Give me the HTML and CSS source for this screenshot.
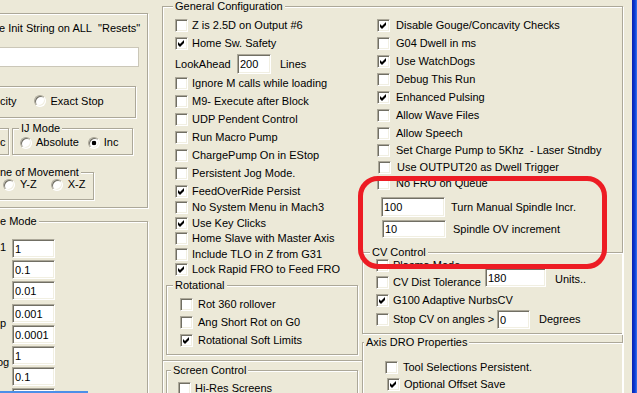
FILE: index.html
```html
<!DOCTYPE html>
<html lang="en">
<head>
    <meta charset="UTF-8">
    <title>General Configuration</title>
    <link rel="stylesheet" href="styles.css">
</head>
<body>
<div class="screen">
    <!-- left column, cut off by the window edge -->
    <div class="col-left">
        <div class="grp grp-init">
            <div class="init-text">e Init String on ALL&nbsp; "Resets"</div>
            <input class="edit edit-flat" type="text">
            <div class="grp grp-motion">
                <span>city</span>
                <span class="rb stop-rb"></span>
                <span class="rb-label">Exact Stop</span>
            </div>
            <div class="mode-row">
                <div class="grp grp-dist"><span>c</span></div>
                <div class="grp grp-ij">
                    <div class="grp-title">IJ Mode</div>
                    <div class="radio-row ij-row">
                        <span class="rb"></span><span class="rb-label">Absolute</span>
                        <span class="rb on ij-inc"></span><span class="rb-label">Inc</span>
                    </div>
                </div>
            </div>
            <div class="grp grp-plane">
                <div class="grp-title">ne of Movement</div>
                <div class="radio-row plane-row">
                    <span class="rb"></span><span class="rb-label">Y-Z</span>
                    <span class="rb plane-xz"></span><span class="rb-label">X-Z</span>
                </div>
            </div>
        </div>

        <div class="grp grp-jog">
            <div class="grp-title">e Mode</div>
            <div class="jog-body">
                <div class="jog-labels">
                    <span class="jog-l1">1</span>
                    <span class="jog-l2">p</span>
                    <span class="jog-l3">og</span>
                </div>
                <div class="jog-inputs">
                    <input class="edit edit-jog" type="text" value="1">
                    <input class="edit edit-jog" type="text" value="0.1">
                    <input class="edit edit-jog" type="text" value="0.01">
                    <input class="edit edit-jog step" type="text" value="0.001">
                    <input class="edit edit-jog" type="text" value="0.0001">
                    <input class="edit edit-jog" type="text" value="1">
                    <input class="edit edit-jog" type="text" value="0.1">
                    <input class="edit edit-jog" type="text" value="0.01">
                </div>
            </div>
        </div>
    </div>

    <!-- General Configuration -->
    <div class="grp grp-gen">
        <div class="grp-title">General Configuration</div>
        <div class="gen-body">
            <div class="col-mid">
                <div class="mid-top">
                    <div class="chk first"><span class="cb"></span><span>Z is 2.5D on Output #6</span></div>
                    <div class="chk"><span class="cb"><svg width="11" height="11" viewBox="0 0 11 11"><path d="M2 4l2 2 4-4v3l-4 4-2-2z"/></svg></span><span>Home Sw. Safety</span></div>
                    <div class="look-row">
                        <span class="look-label">LookAhead</span>
                        <input class="edit edit-look" type="text" value="200">
                        <span class="look-unit">Lines</span>
                    </div>
                    <div class="chk"><span class="cb"></span><span>Ignore M calls while loading</span></div>
                    <div class="chk"><span class="cb"></span><span>M9- Execute after Block</span></div>
                    <div class="chk"><span class="cb"></span><span>UDP Pendent Control</span></div>
                    <div class="chk"><span class="cb"></span><span>Run Macro Pump</span></div>
                    <div class="chk"><span class="cb"></span><span>ChargePump On in EStop</span></div>
                    <div class="chk"><span class="cb"></span><span>Persistent Jog Mode.</span></div>
                    <div class="chk"><span class="cb"><svg width="11" height="11" viewBox="0 0 11 11"><path d="M2 4l2 2 4-4v3l-4 4-2-2z"/></svg></span><span>FeedOverRide Persist</span></div>
                    <div class="chk tight"><span class="cb"></span><span>No System Menu in Mach3</span></div>
                    <div class="chk tight"><span class="cb"><svg width="11" height="11" viewBox="0 0 11 11"><path d="M2 4l2 2 4-4v3l-4 4-2-2z"/></svg></span><span>Use Key Clicks</span></div>
                    <div class="chk tight"><span class="cb"></span><span>Home Slave with Master Axis</span></div>
                    <div class="chk tight"><span class="cb"></span><span>Include TLO in Z from G31</span></div>
                    <div class="chk tight"><span class="cb"><svg width="11" height="11" viewBox="0 0 11 11"><path d="M2 4l2 2 4-4v3l-4 4-2-2z"/></svg></span><span>Lock Rapid FRO to Feed FRO</span></div>

                    <div class="grp grp-rot">
                        <div class="grp-title">Rotational</div>
                        <div class="chk first"><span class="cb"></span><span>Rot 360 rollover</span></div>
                        <div class="chk"><span class="cb"></span><span>Ang Short Rot on G0</span></div>
                        <div class="chk"><span class="cb"><svg width="11" height="11" viewBox="0 0 11 11"><path d="M2 4l2 2 4-4v3l-4 4-2-2z"/></svg></span><span>Rotational Soft Limits</span></div>
                    </div>
                </div>

                <div class="grp grp-screen">
                    <div class="grp-title">Screen Control</div>
                    <div class="chk"><span class="cb"></span><span>Hi-Res Screens</span></div>
                </div>
            </div>

            <div class="col-right">
                <div class="chk first"><span class="cb"><svg width="11" height="11" viewBox="0 0 11 11"><path d="M2 4l2 2 4-4v3l-4 4-2-2z"/></svg></span><span>Disable Gouge/Concavity Checks</span></div>
                <div class="chk"><span class="cb"></span><span>G04 Dwell in ms</span></div>
                <div class="chk"><span class="cb"><svg width="11" height="11" viewBox="0 0 11 11"><path d="M2 4l2 2 4-4v3l-4 4-2-2z"/></svg></span><span>Use WatchDogs</span></div>
                <div class="chk"><span class="cb"></span><span>Debug This Run</span></div>
                <div class="chk"><span class="cb"><svg width="11" height="11" viewBox="0 0 11 11"><path d="M2 4l2 2 4-4v3l-4 4-2-2z"/></svg></span><span>Enhanced Pulsing</span></div>
                <div class="chk"><span class="cb"></span><span>Allow Wave Files</span></div>
                <div class="chk"><span class="cb"></span><span>Allow Speech</span></div>
                <div class="chk h17"><span class="cb"></span><span>Set Charge Pump to 5Khz&nbsp; - Laser Stndby</span></div>
                <div class="chk h16 nudge"><span class="cb"></span><span>Use OUTPUT20 as Dwell Trigger</span></div>
                <div class="chk h16"><span class="cb"></span><span>No FRO on Queue</span></div>

                <div class="spin-row spin-turn">
                    <input class="edit edit-spin" type="text" value="100">
                    <span>Turn Manual Spindle Incr.</span>
                </div>
                <div class="spin-row spin-ov">
                    <input class="edit edit-spin" type="text" value="10">
                    <span>Spindle OV increment</span>
                </div>

                <div class="grp grp-cv">
                    <div class="grp-title">CV Control</div>
                    <div class="chk h16 plasma"><span class="cb"></span><span>Plasma Mode</span></div>
                    <div class="chk cv-dist">
                        <span class="cb"></span><span class="cv-text">CV Dist Tolerance</span>
                        <input class="edit edit-dist" type="text" value="180">
                        <span class="cv-unit">Units..</span>
                    </div>
                    <div class="chk h19"><span class="cb"><svg width="11" height="11" viewBox="0 0 11 11"><path d="M2 4l2 2 4-4v3l-4 4-2-2z"/></svg></span><span>G100 Adaptive NurbsCV</span></div>
                    <div class="chk h19">
                        <span class="cb"></span><span class="cv-angle">Stop CV on angles &gt;</span>
                        <input class="edit edit-angle" type="text" value="0">
                        <span class="cv-deg">Degrees</span>
                    </div>
                </div>

                <div class="grp grp-dro">
                    <div class="grp-title">Axis DRO Properties</div>
                    <div class="chk first dro-tool"><span class="cb"></span><span>Tool Selections Persistent.</span></div>
                    <div class="chk h17 dro-save"><span class="cb"><svg width="11" height="11" viewBox="0 0 11 11"><path d="M2 4l2 2 4-4v3l-4 4-2-2z"/></svg></span><span>Optional Offset Save</span></div>
                </div>
            </div>
        </div>
    </div>

    <div class="frame-edge"></div>

    <!-- hand-drawn highlight and taskbar sliver on top -->
    <div class="mark"></div>
    <div class="task-strip"></div>
</div>
</body>
</html>
```

FILE: styles.css
```css
body {
    margin: 0;
    background-color: #ece9d8;
    font-family: 'Liberation Sans', Arial, sans-serif;
    font-size: 11px;
    line-height: 13px;
    color: #000;
    overflow: hidden;
}

.screen {
    position: relative;
    display: flex;
    align-items: flex-start;
    width: 637px;
    height: 393px;
    overflow: hidden;
    white-space: nowrap;
}

/* etched group box */
.grp {
    box-sizing: border-box;
    flex: none;
    border: 1px solid #aca899;
    box-shadow: inset 1px 1px #fff, 1px 1px #fff;
}

.grp-title {
    display: table;
    margin: -7px 0 0 6px;
    padding: 0 2px;
    background-color: #ece9d8;
}

/* sunken edit box */
.edit {
    box-sizing: border-box;
    display: block;
    flex: none;
    margin: 0;
    padding: 0 2px;
    border: 1px solid;
    border-color: #aca899 #fff #fff #aca899;
    box-shadow: inset 1px 1px #716f64, inset -1px -1px #f1efe2;
    background-color: #fff;
    font: inherit;
    color: #000;
    outline: none;
}

/* checkbox */
.cb {
    box-sizing: border-box;
    display: flex;
    flex: none;
    width: 13px;
    height: 13px;
    margin-right: 4px;
    border: 1px solid;
    border-color: #aca899 #fff #fff #aca899;
    box-shadow: inset 1px 1px #716f64, inset -1px -1px #f1efe2;
    background-color: #fff;
}

.cb svg {
    display: block;
    fill: #000;
}

/* radio button */
.rb {
    box-sizing: border-box;
    flex: none;
    width: 12px;
    height: 12px;
    border-radius: 50%;
    border: 1px solid;
    border-color: #aca899 #fff #fff #aca899;
    box-shadow: inset 1px 1px #716f64, inset -1px -1px #f1efe2;
    background-color: #fff;
}

.rb.on {
    background: radial-gradient(circle, #000 0 2px, #fff 2.6px);
}

.rb-label {
    margin-left: 4px;
}

.chk {
    display: flex;
    align-items: center;
    height: 18px;
}

.chk.first {
    margin-top: 3px;
}

.chk.tight {
    height: 15.5px;
}

.h16 { height: 16px; }
.h17 { height: 17px; }
.h19 { height: 19px; }

/* ---------- left column ---------- */
.col-left {
    flex: none;
    width: 148px;
}

.grp-init {
    width: 178px;
    height: 195px;
    margin: 13px 0 0 -30px;
    padding-left: 29px;
}

.init-text {
    margin: 8px 0 0 -1px;
}

.edit-flat {
    width: 149px;
    height: 20px;
    margin: 12px 0 0 -10px;
    border-color: #cbc7b8;
    box-shadow: none;
}

.grp-motion {
    display: flex;
    align-items: center;
    width: 156px;
    height: 32px;
    margin: 19px 0 0 -20px;
    padding: 0 0 2px 19px;
}

.stop-rb {
    margin-left: 17px;
}

.grp-motion .rb-label {
    margin-left: 5px;
}

.mode-row {
    display: flex;
    margin-top: 10px;
}

.grp-dist {
    display: flex;
    align-items: center;
    width: 29px;
    height: 27px;
    margin-left: -20px;
    padding: 2px 0 0 19px;
}

.grp-ij {
    width: 121px;
    height: 27px;
    margin-left: 3px;
}

.radio-row {
    display: flex;
    align-items: center;
    height: 13px;
}

.ij-row {
    margin-top: 1px;
    padding-left: 7px;
}

.ij-inc {
    margin-left: 9px;
}

.grp-plane {
    width: 124px;
    height: 28px;
    margin: 17px 0 0 -30px;
}

.grp-plane .grp-title {
    margin-left: 27px;
}

.plane-row {
    margin-top: -1px;
    padding-left: 32px;
}

.plane-row .rb-label {
    margin-left: 5px;
}

.plane-xz {
    margin-left: 14px;
}

.grp-jog {
    width: 178px;
    height: 200px;
    margin: 13px 0 0 -30px;
}

.grp-jog .grp-title {
    margin-left: 27px;
}

.jog-body {
    display: flex;
    padding-left: 29px;
}

.jog-labels {
    display: flex;
    flex-direction: column;
    align-items: flex-start;
    width: 12px;
}

.jog-l1 { margin-top: 13px; }
.jog-l2 { margin-top: 63px; }
.jog-l3 { margin: 26px 0 0 -3px; }

.jog-inputs {
    display: flex;
    flex-direction: column;
    gap: 2px;
    margin-top: 11px;
}

.edit-jog {
    width: 43px;
    height: 19px;
}

.edit-jog.step {
    margin-top: 2px;
}

/* ---------- general configuration ---------- */
.grp-gen {
    width: 461px;
    height: 400px;
    margin: 6px 0 0 14px;
    border-bottom: none;
}

.grp-gen > .grp-title {
    margin-left: 10px;
}

.gen-body {
    display: flex;
}

.col-mid {
    flex: none;
    width: 199px;
}

.mid-top {
    height: 344px;
    border-bottom: 1px solid #aca899;
    box-shadow: 0 1px #fff;
}

.mid-top > .chk {
    padding-left: 12px;
}

.look-row {
    display: flex;
    align-items: center;
    height: 20px;
    margin-top: 2px;
    padding-left: 12px;
}

.look-label {
    width: 62px;
}

.edit-look {
    width: 34px;
    height: 20px;
}

.look-unit {
    margin-left: 9px;
}

.grp-rot {
    width: 192px;
    height: 70px;
    margin: 7.5px 0 0 3px;
}

.grp-rot .chk {
    padding-left: 13px;
}

.grp-rot .cb {
    margin-right: 5px;
}

.grp-screen {
    width: 192px;
    height: 40px;
    margin: 9px 0 0 3px;
}

.grp-screen .grp-title {
    margin-left: 4px;
}

.grp-screen .chk {
    margin-top: 2px;
    padding-left: 11px;
}

.col-right {
    flex: none;
    width: 260px;
}

.col-right > .chk {
    padding-left: 15px;
}

.col-right .cb {
    margin-right: 6px;
}

.col-right > .chk.nudge {
    padding-left: 16px;
}

.spin-row {
    display: flex;
    align-items: center;
}

.edit-spin {
    width: 64px;
}

.spin-turn {
    margin-top: 6px;
    padding-left: 19px;
}

.spin-turn .edit-spin {
    height: 20px;
    margin-right: 6px;
}

.spin-ov {
    margin-top: 3px;
    padding-left: 20px;
}

.spin-ov .edit-spin {
    height: 18px;
    margin-right: 7px;
}

.grp-cv {
    width: 260px;
    height: 82px;
    margin-top: 14px;
    border-right: none;
}

.grp-cv .grp-title {
    margin-left: 7px;
}

.grp-cv .chk {
    padding-left: 13px;
}

.grp-cv .cb {
    margin-right: 4px;
}

.chk.plasma {
    margin-top: -2px;
}

.cv-text {
    width: 92px;
}

.edit-dist {
    align-self: flex-start;
    width: 61px;
    height: 19px;
    margin-top: -5px;
}

.cv-unit {
    align-self: flex-start;
    margin-left: 9px;
}

.cv-angle {
    width: 104px;
}

.edit-angle {
    width: 33px;
    height: 19px;
}

.cv-deg {
    margin-left: 9px;
}

.grp-dro {
    width: 260px;
    height: 100px;
    margin-top: 8px;
    border-right: none;
}

.grp-dro .grp-title {
    margin-left: 1px;
}

.grp-dro .chk.first {
    margin-top: 9px;
}

.dro-tool {
    padding-left: 22px;
}

.dro-tool .cb {
    margin-right: 5px;
}

.dro-save {
    padding-left: 24px;
}

.dro-save .cb {
    margin-right: 4px;
}

/* window frame of the dialog to the right */
.frame-edge {
    flex: none;
    width: 5px;
    height: 393px;
    margin-left: 9px;
    background: linear-gradient(to right, #0a1fb0, #0b3ed6 60%, #3d78ec);
}

/* red highlight drawn over the screenshot */
.mark {
    position: absolute;
    left: 358px;
    top: 176px;
    box-sizing: border-box;
    width: 249px;
    height: 93px;
    border: 5px solid #ed1c24;
    border-radius: 20px;
}

.task-strip {
    position: absolute;
    left: 0;
    top: 391px;
    width: 88px;
    height: 2px;
    background-color: #4b8fe8;
}
```
